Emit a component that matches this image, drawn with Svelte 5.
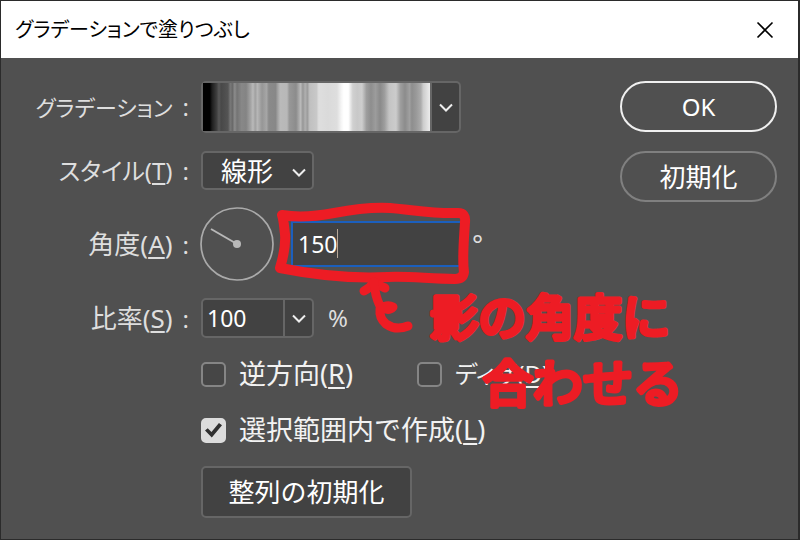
<script lang="ts">
  let style = $state('linear');
  let angle = $state('150');
  let scale = $state('100');
  let reverse = $state(false);
  let dither = $state(false);
  let withinSelection = $state(true);

  // Noise gradient: [position in %, grey level]
  const NOISE_STOPS = [
    [0, 0], [3, 0], [4, 30], [6, 62], [7, 88], [8, 72], [11, 84], [12, 120], [13, 106],
    [14, 140], [15, 116], [17, 136], [19, 132], [21, 164], [22, 186], [23, 160], [24, 182],
    [26, 150], [28, 166], [29, 138], [32, 136], [33, 164], [34, 186], [37, 184], [38, 152],
    [41, 140], [43, 186], [44, 150], [45, 176], [46, 156], [47, 192], [50, 200], [51, 222],
    [55, 218], [59, 222], [61, 246], [62, 255], [64, 255], [66, 208], [68, 200], [70, 206],
    [72, 158], [74, 142], [76, 156], [78, 138], [80, 158], [82, 196], [85, 204], [87, 158],
    [89, 140], [91, 160], [92, 142], [94, 154], [96, 172], [97, 204], [100, 236],
  ];

  const noiseGradient = NOISE_STOPS.map(([at, grey]) => `rgb(${grey} ${grey} ${grey}) ${at}%`).join(', ');

  const radians = $derived((Number(angle) * Math.PI) / 180);
  const needleX = $derived(37 + 30 * Math.cos(radians));
  const needleY = $derived(37 - 30 * Math.sin(radians));
</script>

{#snippet chevron()}
  <svg class="chevron" width="14" height="10" viewBox="0 0 14 10" aria-hidden="true">
    <path d="M1 2.5 L7 8.5 L13 2.5" />
  </svg>
{/snippet}

<div class="dialog" role="dialog" aria-labelledby="dialog-title">
  <header>
    <h1 id="dialog-title">グラデーションで塗りつぶし</h1>
    <button class="close" type="button" aria-label="閉じる">
      <svg width="18" height="18" viewBox="0 0 18 18" aria-hidden="true">
        <path d="M1.5 1.5 L16.5 16.5 M16.5 1.5 L1.5 16.5" />
      </svg>
    </button>
  </header>

  <main>
    <div class="fields">
      <div class="row">
        <span class="label" id="gradient-label"><span class="long">グラデーション</span><i>:</i></span>
        <div class="gradient-picker">
          <button
            class="swatch"
            type="button"
            aria-labelledby="gradient-label"
            style:background-image={`linear-gradient(to right, ${noiseGradient})`}
          ></button>
          <button class="drop" type="button" aria-label="グラデーションを選択">{@render chevron()}</button>
        </div>
      </div>

      <div class="row style-row">
        <label class="label" for="style">スタイル(<u>T</u>)<i>:</i></label>
        <div class="select">
          <select id="style" bind:value={style}>
            <option value="linear">線形</option>
          </select>
          {@render chevron()}
        </div>
      </div>

      <div class="row angle-row">
        <label class="label" for="angle"><span class="kanji">角度(<u>A</u>)</span><i>:</i></label>
        <svg class="dial" width="74" height="74" viewBox="0 0 74 74" aria-hidden="true">
          <circle class="rim" cx="37" cy="37" r="36" />
          <line x1="37" y1="37" x2={needleX} y2={needleY} />
          <circle class="hub" cx="37" cy="37" r="4" />
        </svg>
        <div class="angle-field">
          <input id="angle" type="text" bind:value={angle} />
          <span class="caret"></span>
        </div>
        <span class="unit degree">°</span>
      </div>

      <div class="row scale-row">
        <label class="label" for="scale"><span class="kanji">比率(<u>S</u>)</span><i>:</i></label>
        <div class="combo">
          <input id="scale" type="text" bind:value={scale} />
          <button class="drop" type="button" aria-label="比率を選択">{@render chevron()}</button>
        </div>
        <span class="unit">%</span>
      </div>

      <div class="checks">
        <label class="check reverse">
          <input type="checkbox" bind:checked={reverse} />
          <span>逆方向(<u>R</u>)</span>
        </label>
        <label class="check dither">
          <input type="checkbox" bind:checked={dither} />
          <span>ディザ(<u>D</u>)</span>
        </label>
      </div>

      <div class="checks">
        <label class="check">
          <input type="checkbox" bind:checked={withinSelection} />
          <span>選択範囲内で作成(<u>L</u>)</span>
        </label>
      </div>

      <button class="reset-align" type="button">整列の初期化</button>
    </div>

    <div class="actions">
      <button class="ok" type="button">OK</button>
      <button type="button">初期化</button>
    </div>
  </main>

  <!-- Red pen marks and note over the angle field -->
  <svg class="marks" width="430" height="220" viewBox="270 200 430 220">
    <path
      d="M282 215 C300 218 318 216 334 213 C355 209 372 207 390 208 C414 210 434 214 458 213 Q466 213 465 222 C464 240 462 258 464 272 Q463 279 455 279 C430 279 410 276 388 277 C350 279 315 275 280 268 C283 258 286 246 285 234 C284 227 284 221 282 215 Z"
    />
    <path class="arrow" d="M364 291 Q370 288 374 282 Q380 286 385 288" />
    <path class="arrow" d="M374 282 Q375 296 380 306 Q388 312 393 307 Q387 304 380 309 Q379 318 386 324 Q396 331 408 326" />
    <text x="430" y="335">影の角度に</text>
    <text class="second" x="483" y="402">合わせる</text>
  </svg>
</div>

<style>
  :global(body) {
    margin: 0;
    background: #505050;
  }

  .dialog {
    position: relative;
    box-sizing: border-box;
    min-height: 100vh;
    border: 1px solid #2b2b2b;
    border-width: 1px 2px 1px 1px;
    background: #505050;
    color: #dedede;
    font-family: 'Noto Sans', 'Noto Sans CJK JP', sans-serif;
    font-size: 24px;
    line-height: 32px;
  }

  header {
    display: flex;
    align-items: center;
    justify-content: space-between;
    height: 57px;
    padding: 0 24px 0 14px;
    background: #fff;
    color: #000;
  }

  h1 {
    margin: 0;
    font-size: 20px;
    font-weight: 400;
    font-feature-settings: 'palt';
  }

  button,
  input,
  select {
    box-sizing: border-box;
    margin: 0;
    color: #fff;
    font: inherit;
  }

  button {
    padding: 0;
    border: 0;
    background: none;
  }

  .close {
    display: grid;
    place-items: center;
  }

  .close path {
    fill: none;
    stroke: #000;
    stroke-width: 1.6;
  }

  main {
    display: flex;
    justify-content: space-between;
    padding: 23px 21px 20px 0;
  }

  .row {
    display: flex;
    align-items: center;
  }

  .label {
    width: 188px;
    margin-right: 12px;
    text-align: right;
    white-space: nowrap;
    font-feature-settings: 'palt';
  }

  .label i {
    margin-left: 10px;
    font-style: normal;
  }

  .long {
    font-size: 22px;
  }

  .kanji {
    font-size: 26px;
  }

  u {
    text-decoration-thickness: 2px;
    text-underline-offset: 3px;
  }

  .gradient-picker {
    display: flex;
    box-sizing: border-box;
    width: 260px;
    height: 52px;
    border: 2px solid #666;
    border-radius: 5px;
    background: #424242;
  }

  .swatch {
    flex: 1;
  }

  .drop {
    display: grid;
    width: 29px;
    border-left: 2px solid #666;
    place-items: center;
  }

  .chevron {
    display: block;
    fill: none;
    stroke: #eee;
    stroke-width: 2;
  }

  .style-row {
    margin-top: 18px;
  }

  .select {
    position: relative;
    width: 113px;
  }

  .select select {
    display: block;
    width: 100%;
    height: 39px;
    padding: 0 18px;
    border: 2px solid #666;
    border-radius: 5px;
    background: #424242;
    font-size: 26px;
    appearance: none;
  }

  .select .chevron {
    position: absolute;
    top: 16px;
    right: 8px;
    pointer-events: none;
  }

  .angle-row {
    margin-top: 17px;
  }

  .dial {
    flex: none;
    margin-left: -1px;
  }

  .dial .rim {
    fill: none;
    stroke: #aaa;
    stroke-width: 1.7;
  }

  .dial line {
    stroke: #b8b8b8;
    stroke-width: 2;
  }

  .dial .hub {
    fill: #b8b8b8;
  }

  .angle-field {
    position: relative;
    margin-left: 17px;
  }

  .angle-field input {
    display: block;
    width: 172px;
    height: 46px;
    padding: 0 5px;
    border: 2px solid #1b5fbd;
    background: #424242;
  }

  .caret {
    position: absolute;
    top: 8px;
    left: 46px;
    width: 1px;
    height: 29px;
    background: #b8a898;
  }

  .angle-field input,
  .combo input {
    font-size: 23px;
  }

  .unit {
    margin-left: 14px;
  }

  .degree {
    margin-left: 9px;
    font-size: 26px;
  }

  .scale-row {
    margin-top: 17px;
  }

  .combo {
    display: flex;
    box-sizing: border-box;
    width: 113px;
    height: 40px;
    border: 2px solid #666;
    border-radius: 5px;
    background: #424242;
  }

  .combo input {
    flex: 1;
    min-width: 0;
    padding: 0 4px;
    border: 0;
    background: none;
  }

  .checks {
    display: flex;
    margin: 20px 0 0 200px;
    color: #f2f2f2;
  }

  .checks + .checks {
    margin-top: 24px;
  }

  .check {
    display: flex;
    align-items: center;
    gap: 13px;
    white-space: nowrap;
    font-size: 27px;
  }

  .reverse {
    width: 216px;
  }

  .dither {
    font-size: 24px;
    font-feature-settings: 'palt';
  }

  .check input {
    display: grid;
    flex: none;
    width: 25px;
    height: 25px;
    border: 2px solid #858585;
    border-radius: 5px;
    background: #464646;
    appearance: none;
    place-items: center;
  }

  .check input:checked {
    border-color: #dcdcdc;
    background: #dcdcdc;
  }

  .check input:checked::before {
    width: 17px;
    height: 15px;
    background: #303030;
    clip-path: polygon(0 53%, 16% 38%, 38% 64%, 82% 4%, 100% 18%, 40% 100%);
    content: '';
  }

  .reset-align {
    width: 211px;
    height: 52px;
    margin: 20px 0 0 200px;
    border: 2px solid #666;
    border-radius: 5px;
    background: #424242;
    font-size: 26px;
  }

  .actions {
    display: flex;
    flex: none;
    flex-direction: column;
    gap: 19px;
    width: 157px;
  }

  .actions button {
    height: 51px;
    border: 2px solid #808080;
    border-radius: 26px;
    font-size: 26px;
  }

  .actions .ok {
    border-color: #f0f0f0;
    font-size: 24px;
  }

  .marks {
    position: absolute;
    top: 199px;
    left: 269px;
    pointer-events: none;
  }

  .marks path,
  .marks text {
    stroke: #ed1c24;
    stroke-linecap: round;
    stroke-linejoin: round;
  }

  .marks path {
    fill: none;
    stroke-width: 10;
  }

  .marks .arrow {
    stroke-width: 9;
  }

  .marks text {
    fill: #ed1c24;
    stroke-width: 5;
    font-family: 'Noto Sans CJK JP', sans-serif;
    font-size: 48px;
    font-weight: 400;
  }

  .marks .second {
    font-size: 50px;
  }
</style>
